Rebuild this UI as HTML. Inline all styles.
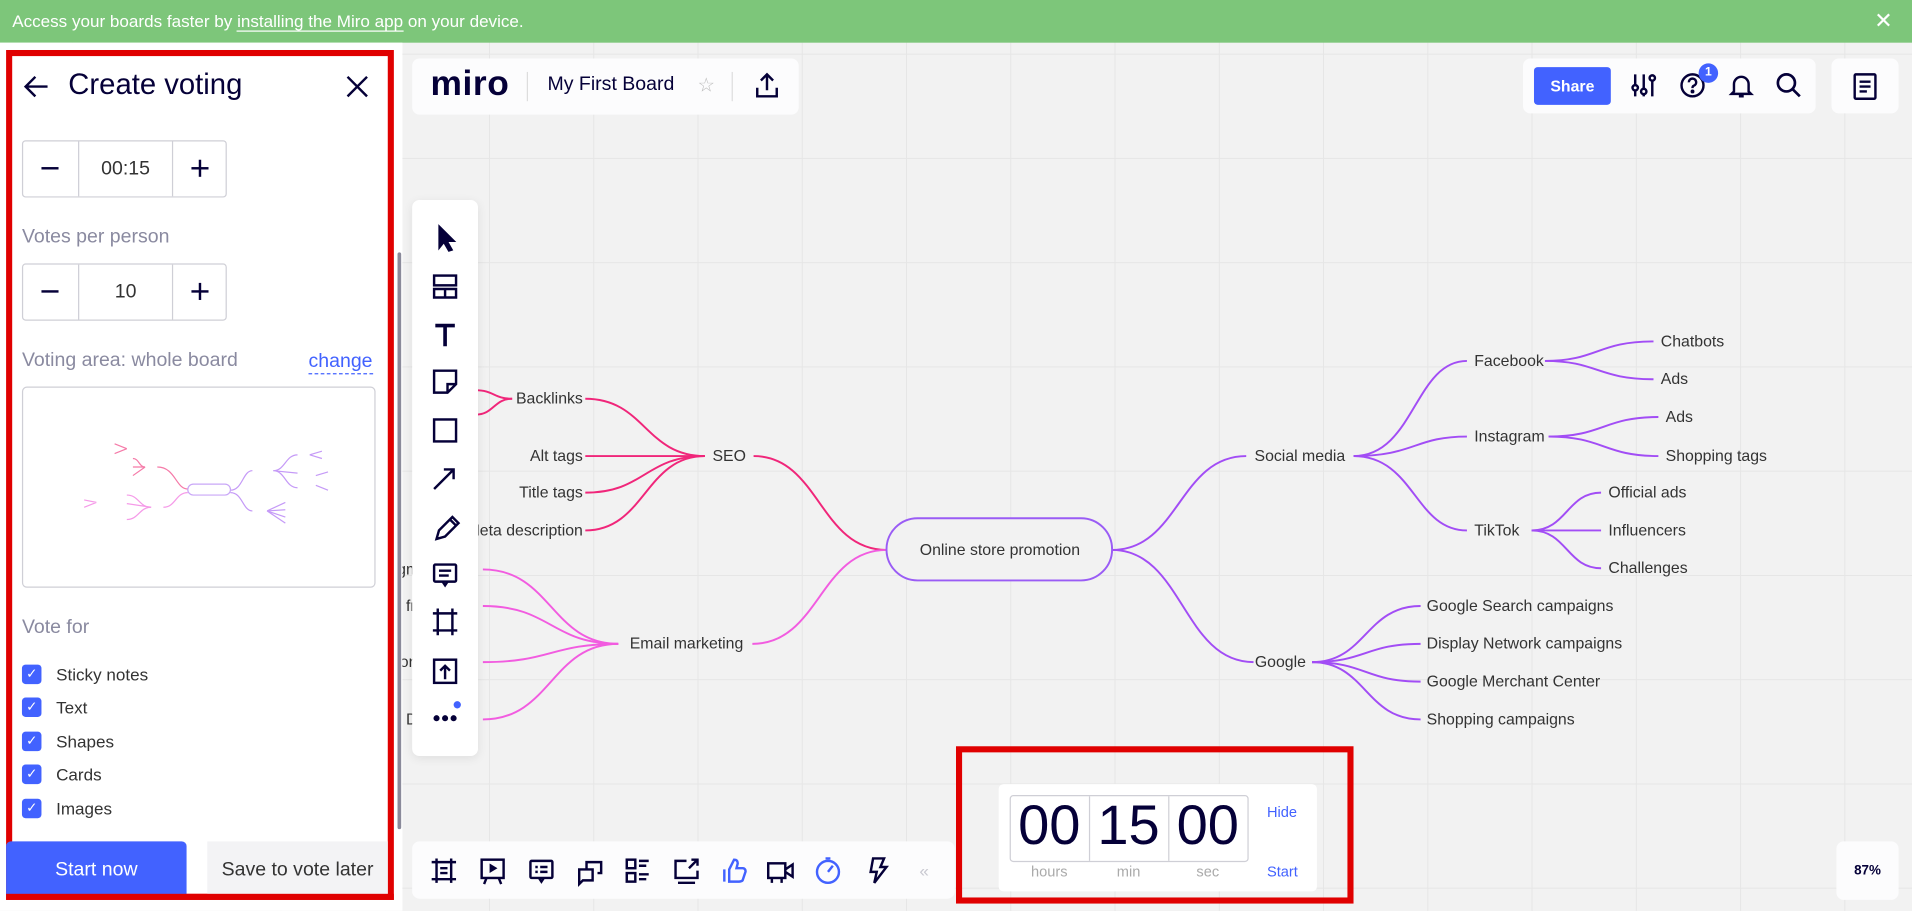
<!DOCTYPE html>
<html><head><meta charset="utf-8">
<style>
html,body{margin:0;padding:0;width:1912px;height:910px;overflow:hidden;background:#f2f2f2}
#w{position:absolute;left:0;top:0;width:1568px;height:747px;transform:scale(1.21939);transform-origin:0 0;font-family:"Liberation Sans",sans-serif;color:#050038;
background-color:#f2f2f2;
background-image:linear-gradient(90deg,#e6e6e6 1px,transparent 1px),linear-gradient(#e6e6e6 1px,transparent 1px);
background-size:85.5px 85.5px;background-position:59px 44px;overflow:hidden}
.abs{position:absolute}
.card{position:absolute;background:#fcfcfd;border-radius:6px}
.ico{position:absolute}
.cb{display:flex;align-items:center;height:27.5px}
.cb span{display:inline-block;width:16px;height:16px;background:#4262ff;border-radius:3px;margin-right:12px;color:#fff;font-size:11px;text-align:center;line-height:16px}
</style></head><body><div id="w">

<div class="abs" style="left:0;top:0;width:1568px;height:35px;background:#7dc67a;color:#fff;font-size:14px;line-height:35px">
<span style="position:absolute;left:10px">Access your boards faster by <span style="border-bottom:1px solid #fff">installing the Miro app</span> on your device.</span>
<span style="position:absolute;left:1537px;top:0;font-size:18px">✕</span>
</div>

<svg class="abs" style="left:0;top:0" width="1568" height="747" font-family="Liberation Sans, sans-serif" font-size="13" fill="#333">
<g fill="none" stroke-width="1.6">
<g stroke="#f0267a">
<path d="M727 451 C672 451 672 374 618 374"/>
<path d="M578 374 C529 374 529 327 480 327"/>
<path d="M578 374 L480 374"/>
<path d="M578 374 C529 374 529 404 480 404"/>
<path d="M578 374 C529 374 529 435 480 435"/>
<path d="M420 327 C405 327 405 320 390 320"/>
<path d="M420 327 C405 327 405 340 390 340"/>
</g>
<g stroke="#f25ce0">
<path d="M727 451 C672 451 672 528 617 528"/>
<path d="M507 528 C452 528 452 467 396 467"/>
<path d="M507 528 C452 528 452 497 396 497"/>
<path d="M507 528 C452 528 452 543 396 543"/>
<path d="M507 528 C452 528 452 590 396 590"/>
</g>
<g stroke="#a24df5">
<path d="M912 451 C967 451 967 374 1022 374"/>
<path d="M912 451 C970 451 970 543 1028 543"/>
<path d="M1110 374 C1160 374 1160 296 1203 296"/>
<path d="M1110 374 C1160 374 1160 358 1203 358"/>
<path d="M1110 374 C1160 374 1160 435 1203 435"/>
<path d="M1267 296 C1310 296 1310 280 1356 280"/>
<path d="M1267 296 C1310 296 1310 311 1356 311"/>
<path d="M1270 358 C1315 358 1315 342 1360 342"/>
<path d="M1270 358 C1315 358 1315 374 1360 374"/>
<path d="M1256 435 C1285 435 1285 404 1313 404"/>
<path d="M1256 435 L1313 435"/>
<path d="M1256 435 C1285 435 1285 466 1313 466"/>
<path d="M1076 543 C1120 543 1120 497 1165 497"/>
<path d="M1076 543 C1120 543 1120 528 1165 528"/>
<path d="M1076 543 C1120 543 1120 559 1165 559"/>
<path d="M1076 543 C1120 543 1120 590 1165 590"/>
</g>
<rect x="727" y="425" width="185" height="51" rx="25.5" stroke="#9a5cf5" fill="#f2f2f2"/>
</g>
<text x="820" y="455" text-anchor="middle">Online store promotion</text>
<text x="598" y="378" text-anchor="middle">SEO</text>
<text x="478" y="331" text-anchor="end">Backlinks</text>
<text x="478" y="378" text-anchor="end">Alt tags</text>
<text x="478" y="408" text-anchor="end">Title tags</text>
<text x="478" y="439" text-anchor="end">Meta description</text>
<text x="563" y="532" text-anchor="middle">Email marketing</text>
<text x="390" y="471" text-anchor="end">Segmentation</text>
<text x="390" y="501" text-anchor="end">Email frequency</text>
<text x="390" y="547" text-anchor="end">Personalization</text>
<text x="390" y="594" text-anchor="end">Discounts</text>
<text x="1066" y="378" text-anchor="middle">Social media</text>
<text x="1050" y="547" text-anchor="middle">Google</text>
<text x="1209" y="300">Facebook</text>
<text x="1209" y="362">Instagram</text>
<text x="1209" y="439">TikTok</text>
<text x="1362" y="284">Chatbots</text>
<text x="1362" y="315">Ads</text>
<text x="1366" y="346">Ads</text>
<text x="1366" y="378">Shopping tags</text>
<text x="1319" y="408">Official ads</text>
<text x="1319" y="439">Influencers</text>
<text x="1319" y="470">Challenges</text>
<text x="1170" y="501">Google Search campaigns</text>
<text x="1170" y="532">Display Network campaigns</text>
<text x="1170" y="563">Google Merchant Center</text>
<text x="1170" y="594">Shopping campaigns</text>
</svg>

<div class="abs" style="left:0;top:35px;width:330px;height:712px;background:#fff"></div>
<div class="abs" style="left:326px;top:207px;width:3px;height:473px;background:#8a8a9a;border-radius:2px"></div>
<div class="abs" style="left:5px;top:41px;width:308px;height:687px;border:5px solid #e00000"></div>
<svg class="ico" style="left:18px;top:59px" width="24" height="24" fill="none" stroke="#050038" stroke-width="2"><path d="M21 12H3M11 4l-8 8 8 8"/></svg>
<div class="abs" style="left:56px;top:56px;font-size:24px;color:#050038">Create voting</div>
<svg class="ico" style="left:283px;top:61px" width="20" height="20" stroke="#050038" stroke-width="2"><path d="M2 2L18 18M18 2L2 18"/></svg>

<div class="abs" style="left:18px;top:115px;width:166px;height:45px;border:1px solid #cfcfd6;border-radius:3px;font-size:16px">
<div class="abs" style="left:45px;top:0;width:76px;height:45px;border-left:1px solid #cfcfd6;border-right:1px solid #cfcfd6;text-align:center;line-height:45px;color:#333">00:15</div>
<div class="abs" style="left:15px;top:21px;width:14px;height:2px;background:#050038"></div>
<div class="abs" style="left:138px;top:21px;width:14px;height:2px;background:#050038"></div>
<div class="abs" style="left:144px;top:15px;width:2px;height:14px;background:#050038"></div>
</div>
<div class="abs" style="left:18px;top:186px;font-size:16px;color:#8a8aa0">Votes per person</div>
<div class="abs" style="left:18px;top:216px;width:166px;height:45px;border:1px solid #cfcfd6;border-radius:3px;font-size:16px">
<div class="abs" style="left:45px;top:0;width:76px;height:45px;border-left:1px solid #cfcfd6;border-right:1px solid #cfcfd6;text-align:center;line-height:45px;color:#333">10</div>
<div class="abs" style="left:15px;top:21px;width:14px;height:2px;background:#050038"></div>
<div class="abs" style="left:138px;top:21px;width:14px;height:2px;background:#050038"></div>
<div class="abs" style="left:144px;top:15px;width:2px;height:14px;background:#050038"></div>
</div>
<div class="abs" style="left:18px;top:287px;font-size:16px;color:#8a8aa0">Voting area: whole board</div>
<div class="abs" style="left:253px;top:287px;font-size:16px;color:#4262ff;border-bottom:1px dashed #4262ff;line-height:19px">change</div>
<div class="abs" style="left:18px;top:317px;width:288px;height:163px;border:1px solid #cfcfd6;border-radius:4px;background:#fff">
<svg width="288" height="163" fill="none" stroke-width="1">
<g stroke="#f57aa8"><path d="M135 83 C125 83 125 65 110 65 M100 65 C95 65 95 58 90 58 M100 65 L90 65 M100 65 L90 72 M85 50 L75 46 M85 50 L75 54"/></g>
<g stroke="#f59ae8"><path d="M135 86 C125 86 125 98 115 98 M105 98 C95 98 95 88 85 88 M105 98 L85 95 M105 98 C95 98 95 108 85 108 M60 94 L50 92 M60 94 L50 98"/></g>
<g stroke="#c59af7"><path d="M170 84 C180 84 180 68 188 68 M205 68 C215 68 215 55 225 55 M205 68 L225 70 M205 68 C215 68 215 82 225 82 M170 86 C180 86 180 101 188 101 M200 101 L215 94 M200 101 L215 100 M200 101 L215 106 M200 101 L215 111 M235 55 L245 52 M235 55 L245 58 M240 72 L250 69 M240 80 L250 84"/></g>
<rect x="135" y="79" width="35" height="9" rx="4.5" stroke="#c9a7f7"/>
</g></svg>
</div>
<div class="abs" style="left:18px;top:506px;font-size:16px;color:#8a8aa0">Vote for</div>
<div class="abs" style="left:18px;top:539px;font-size:14px;color:#333">
<div class="cb"><span>✓</span>Sticky notes</div>
<div class="cb"><span>✓</span>Text</div>
<div class="cb"><span>✓</span>Shapes</div>
<div class="cb"><span>✓</span>Cards</div>
<div class="cb"><span>✓</span>Images</div>
</div>
<div class="abs" style="left:5px;top:690px;width:148px;height:45px;background:#4262ff;border-radius:4px 4px 0 0;color:#fff;font-size:16px;text-align:center;line-height:48px">Start now</div>
<div class="abs" style="left:170px;top:690px;width:148px;height:45px;background:#f3f3f5;color:#333;font-size:16px;text-align:center;line-height:48px">Save to vote later</div>
<div class="abs" style="left:5px;top:733px;width:318px;height:5px;background:#e00000"></div>

<div class="card" style="left:338px;top:48px;width:317px;height:46px">
<div class="abs" style="left:15px;top:5px;font-size:29px;font-weight:bold;letter-spacing:0.5px">miro</div>
<div class="abs" style="left:94px;top:11px;width:1px;height:24px;background:#ddd"></div>
<div class="abs" style="left:111px;top:13px;font-size:16px">My First Board</div>
<div class="abs" style="left:234px;top:12px;font-size:16px;color:#bbb">☆</div>
<div class="abs" style="left:262px;top:11px;width:1px;height:24px;background:#ddd"></div>
<svg class="ico" style="left:280px;top:11px" width="22" height="22" fill="none" stroke="#050038" stroke-width="2"><path d="M11 15V2M6 7l5-5 5 5M3 13v7h16v-7"/></svg>
</div>

<div class="card" style="left:1249px;top:48px;width:240px;height:45px">
<div class="abs" style="left:9px;top:7px;width:63px;height:31px;background:#4262ff;border-radius:3px;color:#fff;font-weight:bold;font-size:13px;text-align:center;line-height:31px">Share</div>
<svg class="ico" style="left:88px;top:11px" width="22" height="22" fill="none" stroke="#050038" stroke-width="2"><path d="M4 2v18M11 2v18M18 2v18"/><circle cx="4" cy="13" r="2.2" fill="#fff"/><circle cx="11" cy="16" r="2.2" fill="#fff"/><circle cx="18" cy="5" r="2.2" fill="#fff"/></svg>
<svg class="ico" style="left:128px;top:11px" width="22" height="22" fill="none" stroke="#050038" stroke-width="2"><circle cx="11" cy="11" r="9"/><path d="M8 8.5a3 3 0 1 1 4 2.8c-1 .4-1 1-1 2"/><circle cx="11" cy="16" r=".6" fill="#050038"/></svg>
<div class="abs" style="left:144px;top:4px;width:16px;height:16px;border-radius:8px;background:#4262ff;color:#fff;font-size:10px;font-weight:bold;text-align:center;line-height:16px">1</div>
<svg class="ico" style="left:168px;top:11px" width="22" height="22" fill="none" stroke="#050038" stroke-width="2"><path d="M5 16V10a6 6 0 0 1 12 0v6l2 2H3z M9 20h4"/></svg>
<svg class="ico" style="left:207px;top:11px" width="22" height="22" fill="none" stroke="#050038" stroke-width="2.2"><circle cx="9" cy="9" r="7"/><path d="M14 14l6 6"/></svg>
</div>
<div class="card" style="left:1502px;top:48px;width:55px;height:45px">
<svg class="ico" style="left:17px;top:11px" width="22" height="24" fill="none" stroke="#050038" stroke-width="2"><rect x="2" y="2" width="17" height="20" rx="1"/><path d="M6 8h9M6 12h9M6 16h6"/></svg>
</div>

<div class="card" style="left:338px;top:164px;width:54px;height:456px;background:#fff;box-shadow:0 2px 8px rgba(0,0,0,.08)">
<svg width="54" height="456" fill="none" stroke="#050038" stroke-width="2">
<path d="M22 21l0 19 4-5 4 7 3-1-4-7 6 0z" fill="#050038" stroke-width="1"/>
<rect x="18" y="62" width="18" height="8"/><path d="M18 73h18v7H18zM27 73v7"/>
<path d="M19 103h16M27 103v17" stroke-width="3"/>
<path d="M18 140h18v11l-7 7H18z M29 158v-7h7"/>
<rect x="18" y="180" width="18" height="18"/>
<path d="M18 237l16-16M26 221h8v8"/>
<path d="M20 278l2-7 11-11 5 5-11 11z M31 262l5 5"/>
<rect x="18" y="299" width="18" height="14" rx="1"/><path d="M22 304h10M22 308h8M25 313l2 3 2-3"/>
<path d="M21 335v22M33 335v22M17 339h20M17 353h20"/>
<rect x="18" y="377" width="18" height="19"/><path d="M27 393v-11M23 386l4-4 4 4"/>
<circle cx="20" cy="425" r="1.5" fill="#050038"/><circle cx="27" cy="425" r="1.5" fill="#050038"/><circle cx="34" cy="425" r="1.5" fill="#050038"/>
<circle cx="37" cy="414" r="3" fill="#4262ff" stroke="none"/>
</svg>
</div>

<div class="card" style="left:338px;top:690px;width:445px;height:47px">
<svg width="445" height="47" fill="none" stroke="#050038" stroke-width="2">
<g transform="translate(16,14)"><path d="M4 0v20M16 0v20M0 3h20M0 17h20M7 8h6M7 12h6"/></g>
<g transform="translate(56,14)"><rect x="1" y="1" width="18" height="15"/><path d="M8 5l5 3-5 3z" fill="#050038" stroke-width="1"/><path d="M5 16l-2 5M15 16l2 5"/></g>
<g transform="translate(96,14)"><rect x="1" y="2" width="18" height="14" rx="1"/><path d="M5 7h2M9 7h6M5 11h2M9 11h6M8 16l2 3 2-3"/></g>
<g transform="translate(136,14)"><path d="M1 9h11v9H4l-3 3z M7 9V3h12v9h-3"/></g>
<g transform="translate(175,14)"><rect x="1" y="1" width="7" height="7"/><rect x="1" y="12" width="7" height="7"/><path d="M11 2h8M11 6h6M11 13h8M11 17h6"/></g>
<g transform="translate(215,14)"><path d="M10 2H1v14h18v-6M3 20h14M12 8l7-7M14 1h5v5"/></g>
<g transform="translate(254,13)" stroke="#4262ff"><path d="M2 10v10M6 10l4-8c2 0 3 1 3 3l-1 4h5c2 0 3 2 2 4l-2 6c-1 1-2 1-3 1H6z"/></g>
<g transform="translate(291,14)"><rect x="1" y="4" width="14" height="12"/><path d="M15 9l6-4v10l-6-4M4 16v4M12 16v4"/></g>
<g transform="translate(331,13)" stroke="#4262ff"><circle cx="10" cy="12" r="9"/><path d="M8 1h4M10 12l4-5"/></g>
<g transform="translate(371,13)"><path d="M7 1h9l-3 7h5L8 21l2-9H5z"/></g>
<text x="416" y="29" font-family="Liberation Sans" font-size="14" fill="#c8c8d0" stroke="none">«</text>
</svg>
</div>

<div class="abs" style="left:784px;top:612px;width:316px;height:119px;border:5px solid #e00000"></div>
<div class="abs" style="left:819px;top:643px;width:261px;height:88px;background:#fff;border-radius:4px">
<div class="abs" style="left:9px;top:9px;width:194px;height:53px;border:1px solid #cfcfd6;border-radius:3px"></div>
<div class="abs" style="left:74px;top:10px;width:1px;height:53px;background:#cfcfd6"></div>
<div class="abs" style="left:139px;top:10px;width:1px;height:53px;background:#cfcfd6"></div>
<div class="abs" style="left:9px;top:6px;width:65px;text-align:center;font-size:46px;color:#050038">00</div>
<div class="abs" style="left:74px;top:6px;width:65px;text-align:center;font-size:46px;color:#050038">15</div>
<div class="abs" style="left:139px;top:6px;width:65px;text-align:center;font-size:46px;color:#050038">00</div>
<div class="abs" style="left:9px;top:65px;width:65px;text-align:center;font-size:12px;color:#aaa">hours</div>
<div class="abs" style="left:74px;top:65px;width:65px;text-align:center;font-size:12px;color:#aaa">min</div>
<div class="abs" style="left:139px;top:65px;width:65px;text-align:center;font-size:12px;color:#aaa">sec</div>
<div class="abs" style="left:220px;top:16px;font-size:12px;color:#4262ff">Hide</div>
<div class="abs" style="left:220px;top:65px;font-size:12px;color:#4262ff">Start</div>
</div>

<div class="card" style="left:1506px;top:690px;width:51px;height:48px;font-size:11px;font-weight:bold;text-align:center;line-height:48px">87%</div>

</div></body></html>
